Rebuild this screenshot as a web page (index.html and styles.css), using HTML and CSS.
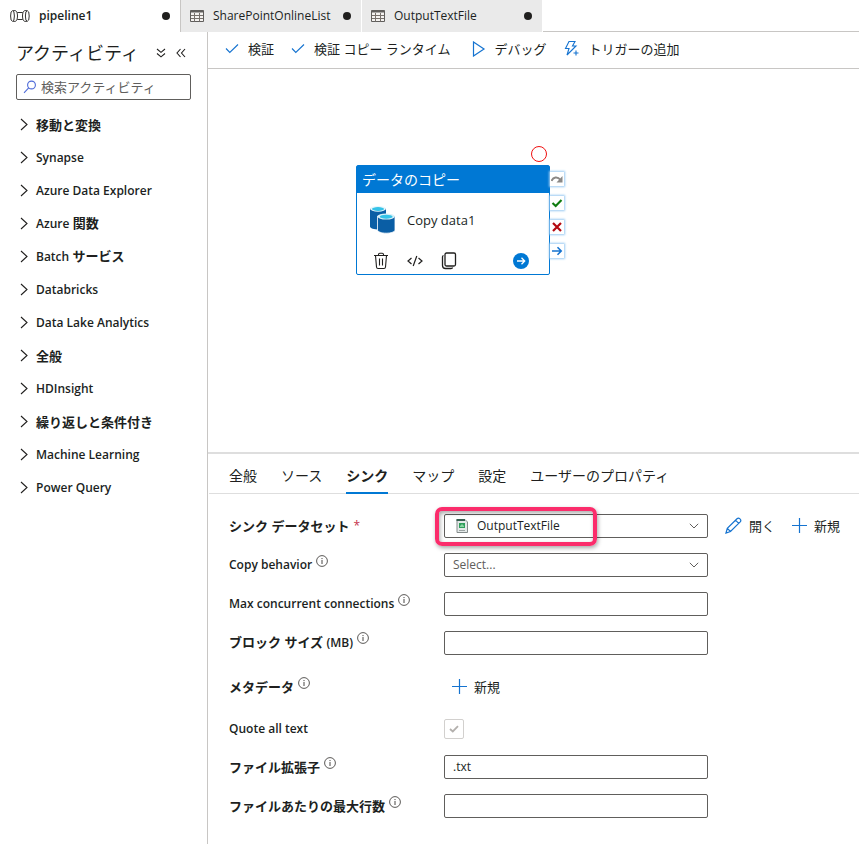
FILE: index.html
```html
<!DOCTYPE html>
<html lang="ja">
<head>
<meta charset="utf-8">
<title>pipeline1</title>
<meta name="viewport" content="width=device-width, initial-scale=1">
<link rel="stylesheet" href="styles.css">
</head>
<body>
<svg class="defs" width="0" height="0" aria-hidden="true">
  <symbol id="check" viewBox="0 0 14 14"><path d="M1 6.500 4.800 10.500 13 2.500" fill="none" stroke="currentColor" stroke-width="1.100"/></symbol>
  <symbol id="chevron" viewBox="0 0 8 14"><path d="M1 1 7 6.500 1 12" fill="none" stroke="currentColor" stroke-width="1.100"/></symbol>
  <symbol id="down" viewBox="0 0 10 6"><path d="M.8.8 5 5 9.2.8" fill="none" stroke="currentColor"/></symbol>
  <symbol id="plus" viewBox="0 0 15 15"><path d="M7.5 0v15M0 7.5h15" fill="none" stroke="currentColor" stroke-width="1.2"/></symbol>
  <symbol id="info" viewBox="0 0 12 12"><circle cx="6" cy="6" r="5.4" fill="none" stroke="currentColor" stroke-width=".9"/><path d="M6 5v4M6 3v1.1" fill="none" stroke="currentColor"/></symbol>
  <symbol id="table" viewBox="0 0 14 12"><path d="M.5.5h13v11H.5z" fill="#f4f2f0" stroke="#605e5c"/><path d="M.5 1.500h13" stroke="#605e5c" stroke-width="2"/><path d="M1 5.500h12M1 8.500h12M4.500 3v8.500M9.500 3v8.500" fill="none" stroke="#77716c"/></symbol>
</svg>
<nav class="tabs" aria-label="開いているリソース">
  <a class="tab active" href="#pipeline1">
    <svg width="20" height="12" viewBox="0 0 20 12" fill="none" stroke="#323130" stroke-width="1"><ellipse cx="2.500" cy="6" rx="1.900" ry="5.300"/><path d="M3 .7h2.500c1.200.4 2 2.500 2 5.300s-.8 4.900-2 5.300H3M17 .7h-2.500c-1.200.4-2 2.500-2 5.300s.8 4.900 2 5.300H17M7.300 2.500h5.400M7.300 9.500h5.400"/><ellipse cx="17.300" cy="6" rx="1.900" ry="5.300"/></svg>
    <span>pipeline1</span><i class="dot"></i>
  </a>
  <a class="tab" href="#sharepoint"><svg width="14" height="12"><use href="#table"/></svg><span>SharePointOnlineList</span><i class="dot"></i></a>
  <a class="tab" href="#output"><svg width="14" height="12"><use href="#table"/></svg><span>OutputTextFile</span><i class="dot"></i></a>
</nav>
<div class="workspace">
  <aside class="sidebar">
    <header class="side-head">
      <h1>アクティビティ</h1>
      <button type="button" aria-label="すべて展開"><svg width="10" height="10" viewBox="0 0 10 10" fill="none" stroke="currentColor" stroke-width="1.1"><path d="M1 1 5 4.300 9 1M1 5.500 5 8.800 9 5.500"/></svg></button>
      <button type="button" aria-label="折りたたむ"><svg width="10" height="10" viewBox="0 0 10 10" fill="none" stroke="currentColor" stroke-width="1.1"><path d="M4.500 1 1 5l3.500 4M9 1 5.500 5 9 9"/></svg></button>
    </header>
    <label class="search">
      <svg width="14" height="14" viewBox="0 0 14 14" fill="none" stroke="#4f6bd8" stroke-width="1.1"><circle cx="8.500" cy="5" r="3.900"/><path d="M5.700 7.800 1 12.800"/></svg>
      <input type="search" placeholder="検索アクティビティ" aria-label="検索アクティビティ">
    </label>
    <ul class="groups">
      <li><button type="button"><svg width="8" height="14"><use href="#chevron"/></svg>移動と変換</button></li>
      <li><button type="button"><svg width="8" height="14"><use href="#chevron"/></svg><span class="latin">Synapse</span></button></li>
      <li><button type="button"><svg width="8" height="14"><use href="#chevron"/></svg><span class="latin">Azure Data Explorer</span></button></li>
      <li><button type="button"><svg width="8" height="14"><use href="#chevron"/></svg><span><span class="latin">Azure</span> 関数</span></button></li>
      <li><button type="button"><svg width="8" height="14"><use href="#chevron"/></svg><span><span class="latin">Batch</span> サービス</span></button></li>
      <li><button type="button"><svg width="8" height="14"><use href="#chevron"/></svg><span class="latin">Databricks</span></button></li>
      <li><button type="button"><svg width="8" height="14"><use href="#chevron"/></svg><span class="latin">Data Lake Analytics</span></button></li>
      <li><button type="button"><svg width="8" height="14"><use href="#chevron"/></svg>全般</button></li>
      <li><button type="button"><svg width="8" height="14"><use href="#chevron"/></svg><span class="latin">HDInsight</span></button></li>
      <li><button type="button"><svg width="8" height="14"><use href="#chevron"/></svg>繰り返しと条件付き</button></li>
      <li><button type="button"><svg width="8" height="14"><use href="#chevron"/></svg><span class="latin">Machine Learning</span></button></li>
      <li><button type="button"><svg width="8" height="14"><use href="#chevron"/></svg><span class="latin">Power Query</span></button></li>
    </ul>
  </aside>
  <main class="main">
    <div class="toolbar">
      <button type="button"><svg width="14" height="14"><use href="#check"/></svg>検証</button>
      <button type="button"><svg width="14" height="14"><use href="#check"/></svg>検証 コピー ランタイム</button>
      <button type="button"><svg width="18" height="16" viewBox="-4 0 18 16" fill="none" stroke="currentColor" stroke-width="1.200"><path d="M1.500 1v14L12 8z"/></svg>デバッグ</button>
      <button type="button"><svg width="16" height="18" viewBox="0 0 16 18" fill="none" stroke="currentColor" stroke-width="1.100"><path d="M5 1.500h6L8.500 6H12L3 15l2-6.500H1.500z"/><path d="M12 10.500v5M9.500 13h5"/></svg>トリガーの追加</button>
    </div>
    <section class="canvas">
      <span class="breakpoint"></span>
      <article class="node">
        <h2>データのコピー</h2>
        <div class="node-body">
          <svg width="27" height="30" viewBox="0 0 27 30"><path d="M1 3.500v18c0 1.700 4 3 9 3V3.500z" fill="#0a5ea5"/><path d="M8 3.500h9v9H8z" fill="#0a5ea5"/><ellipse cx="9" cy="3.800" rx="8" ry="2.900" fill="#e6f6fb"/><ellipse cx="9" cy="4" rx="6" ry="1.900" fill="#35c3e8"/><path d="M8.500 11v14c0 1.700 3.800 3.200 8.700 3.200s8.800-1.500 8.800-3.200V11z" fill="#0a5ea5" stroke="#fff" stroke-width=".8"/><ellipse cx="17.200" cy="11.500" rx="8.600" ry="3.100" fill="#d8f0f8"/><ellipse cx="17.200" cy="11.700" rx="6.400" ry="2" fill="#35c3e8"/></svg>
          <span>Copy data1</span>
        </div>
        <div class="node-actions">
          <button type="button" aria-label="削除"><svg width="16" height="18" viewBox="0 0 16 18" fill="none" stroke="currentColor" stroke-width="1.100"><path d="M1 3.500h14M5.500 3.500V2.500c0-.8.500-1.300 1.300-1.300h2.400c.8 0 1.300.5 1.300 1.300v1M2.500 3.500l1 11.500c.1 1 .6 1.500 1.500 1.500h6c.9 0 1.400-.5 1.500-1.500l1-11.500M6.500 6.500v7M9.500 6.500v7"/></svg></button>
          <button type="button" aria-label="コード"><svg width="16" height="12" viewBox="0 0 16 12" fill="none" stroke="currentColor" stroke-width="1.200"><path d="M4.500 3 1 6l3.500 3M11.500 3 15 6l-3.500 3M9.800 1 6.200 11"/></svg></button>
          <button type="button" aria-label="複製"><svg width="16" height="18" viewBox="0 0 16 18" fill="none" stroke="currentColor" stroke-width="1.300"><rect x="4" y="1" width="10.500" height="13" rx="1.500"/><path d="M2.500 3.500c-.8.300-1 .8-1 1.500v8.500c0 2 1 3 3 3H10c.8 0 1.400-.3 1.600-1"/></svg></button>
          <button type="button" class="go" aria-label="次へ"><svg width="16" height="16" viewBox="0 0 16 16"><circle cx="8" cy="8" r="8" fill="#0078d4"/><path d="M4 8h7.500M8.500 4.800 11.700 8l-3.200 3.200" fill="none" stroke="#fff" stroke-width="1.300"/></svg></button>
        </div>
      </article>
      <div class="ports">
        <button type="button" aria-label="スキップ時"><svg width="12" height="12" viewBox="0 0 12 12" fill="none" stroke="#8a8886" stroke-width="1.900"><path d="M.5 8C2 4 6.500 3 9.500 7"/><path d="M11.500 3v6.500H5.500z" fill="#8a8886" stroke="none"/></svg></button>
        <button type="button" aria-label="成功時"><svg width="12" height="12" viewBox="0 0 12 12" fill="none" stroke="#107c10" stroke-width="2.100"><path d="M1.500 6 4.700 9 10.500 3"/></svg></button>
        <button type="button" aria-label="失敗時"><svg width="12" height="12" viewBox="0 0 12 12" fill="none" stroke="#b4080f" stroke-width="2.200"><path d="m2 2 8 8M10 2l-8 8"/></svg></button>
        <button type="button" aria-label="完了時"><svg width="12" height="12" viewBox="0 0 12 12" fill="none" stroke="#1573d0" stroke-width="1.600"><path d="M1 6h9M6.500 2.300 10.200 6 6.500 9.700"/></svg></button>
      </div>
    </section>
    <section class="panel">
      <nav class="panel-tabs" aria-label="プロパティ">
        <a href="#general">全般</a><a href="#source">ソース</a><a class="current" href="#sink">シンク</a><a href="#mapping">マップ</a><a href="#settings">設定</a><a href="#user">ユーザーのプロパティ</a>
      </nav>
      <form class="form">
        <div class="row">
          <label for="dataset">シンク データセット <b class="req">*</b></label>
          <div class="field">
            <div class="control">
              <select id="dataset" class="with-icon"><option>OutputTextFile</option></select>
              <svg class="file" width="12" height="14" viewBox="0 0 12 14"><path d="M1 .5h8L11.500 3v10.500H1z" fill="#e4e9e8" stroke="#848b8b"/><path d="M.5 0h8.500v2H.5z" fill="#365f50"/><path d="M3 4h6v5H3z" fill="#2f9e5b"/><path d="M4 7 6 5l2 2v1H4z" fill="#8bd5a4"/><path d="M3 11.500h6" stroke="#9ba3a3"/></svg>
              <svg class="caret" width="10" height="6"><use href="#down"/></svg>
              <span class="highlight"></span>
            </div>
            <button type="button" class="link"><svg width="17" height="17" viewBox="0 0 17 17" fill="none" stroke="currentColor" stroke-width="1.200"><path d="M1 16 2.300 11.300 12 1.800c1.800-1.800 5 1 3.200 3L5.500 14.500zM10.500 3.200l3.200 3.200M2.300 11.300l3.200 3.200"/></svg>開く</button>
            <button type="button" class="link"><svg width="15" height="15"><use href="#plus"/></svg>新規</button>
          </div>
        </div>
        <div class="row">
          <label for="behavior"><span class="latin">Copy behavior</span><svg class="info" width="12" height="12"><use href="#info"/></svg></label>
          <div class="field"><div class="control">
            <select id="behavior" class="empty"><option>Select...</option></select>
            <svg class="caret" width="10" height="6"><use href="#down"/></svg>
          </div></div>
        </div>
        <div class="row">
          <label for="conn"><span class="latin">Max concurrent connections</span><svg class="info" width="12" height="12"><use href="#info"/></svg></label>
          <div class="field"><div class="control"><input id="conn" type="text"></div></div>
        </div>
        <div class="row">
          <label for="block"><span>ブロック サイズ <span class="latin">(MB)</span></span><svg class="info" width="12" height="12"><use href="#info"/></svg></label>
          <div class="field"><div class="control"><input id="block" type="text"></div></div>
        </div>
        <div class="row tall">
          <label for="meta">メタデータ<svg class="info" width="12" height="12"><use href="#info"/></svg></label>
          <div class="field"><button id="meta" type="button" class="link inset"><svg width="15" height="15"><use href="#plus"/></svg>新規</button></div>
        </div>
        <div class="row short">
          <label for="quote"><span class="latin">Quote all text</span></label>
          <div class="field"><span class="tick"><input id="quote" type="checkbox" checked disabled><svg width="10" height="8" viewBox="0 0 10 8"><path d="M1 4 3.800 6.500 9 1.200" fill="none" stroke="#b3b0ad" stroke-width="1.800"/></svg></span></div>
        </div>
        <div class="row">
          <label for="ext">ファイル拡張子<svg class="info" width="12" height="12"><use href="#info"/></svg></label>
          <div class="field"><div class="control"><input id="ext" type="text" value=".txt"></div></div>
        </div>
        <div class="row">
          <label for="rows">ファイルあたりの最大行数<svg class="info" width="12" height="12"><use href="#info"/></svg></label>
          <div class="field"><div class="control"><input id="rows" type="text"></div></div>
        </div>
      </form>
    </section>
  </main>
</div>
</body>
</html>
```

FILE: styles.css
```css
* { box-sizing: border-box; }
body {
  margin: 0;
  min-height: 100vh;
  display: flex;
  flex-direction: column;
  background: #fff;
  color: #201f1e;
  font: 13px/20px "Open Sans", "Noto Sans CJK JP", sans-serif;
}
button, input, select { font: inherit; color: inherit; }
button { border: 0; padding: 0; background: none; cursor: pointer; }
a { color: inherit; text-decoration: none; }
svg { flex: none; display: block; }
.defs { position: absolute; }
.latin { font-size: 12px; }

.tabs { display: flex; height: 32px; box-shadow: inset 0 -1px #c8c6c4; }
.tab {
  flex: 0 1 181px;
  min-width: 0;
  display: flex;
  align-items: center;
  gap: 9px;
  padding: 0 10px 0 9px;
  border-right: 1px solid #fff;
  background: #eaeaea;
  font-size: 12px;
}
.tab.active {
  padding-left: 10px;
  background: #fff;
  font-weight: 600;
  border-color: #c8c6c4;
}
.dot { width: 8px; height: 8px; margin-left: auto; border-radius: 50%; background: #201f1e; }

.workspace { flex: 1; display: flex; }
.sidebar { flex: 0 0 208px; min-width: 0; padding: 0 16px; border-right: 1px solid #c8c6c4; }
.side-head { display: flex; align-items: center; gap: 10px; height: 42px; }
.side-head h1 { flex: 1; min-width: 0; margin: 0; font-size: 18px; line-height: 24px; font-weight: 400; white-space: nowrap; }
.side-head button:last-child { margin-right: 5px; }
.search {
  display: flex;
  align-items: center;
  gap: 4px;
  height: 26px;
  padding: 0 6px;
  border: 1px solid #605e5c;
  border-radius: 2px;
}
.search input { flex: 1; width: 100%; min-width: 0; padding: 0; border: 0; outline: 0; background: none; }
.search input::placeholder { color: #605e5c; opacity: 1; }
.groups { margin: 8px 0 0; padding: 0; list-style: none; }
.groups button {
  display: flex;
  align-items: center;
  gap: 8px;
  width: 100%;
  height: 33px;
  padding-left: 4px;
  font-weight: 600;
  text-align: left;
}

.main { flex: 1; min-width: 0; display: flex; flex-direction: column; }
.toolbar { display: flex; align-items: center; gap: 17px; height: 37px; padding: 0 17px 2px; border-bottom: 1px solid #c8c6c4; }
.toolbar button { display: flex; align-items: center; gap: 9px; white-space: nowrap; }
.toolbar svg { color: #1573d0; }

.canvas { position: relative; flex: 1; min-height: 383px; }
.breakpoint { position: absolute; left: 323px; top: 77px; width: 16px; height: 16px; border: 1px solid #f01010; border-radius: 50%; }
.node {
  position: absolute;
  left: 148px;
  top: 96px;
  width: 194px;
  border: 1px solid #0078d4;
  border-radius: 2px;
  background: #fff;
}
.node h2 { margin: 0; padding: 0 5px; background: #0078d4; color: #fff; font-size: 14px; line-height: 27px; font-weight: 400; }
.node-body { display: flex; align-items: center; gap: 11px; height: 54px; padding: 0 12px; }
.node-actions { display: flex; align-items: center; gap: 18px; height: 27px; padding: 0 20px 0 16px; }
.node-actions .go { margin-left: auto; }
.ports { position: absolute; left: 342px; top: 103px; display: grid; gap: 10px; }
.ports button { width: 14px; height: 14px; padding: 1px; background: #fff; box-shadow: 0 0 2px 1px #9ccbf2; }

.panel { border-top: 2px solid #dedede; padding-bottom: 19px; }
.panel-tabs { display: flex; gap: 24px; height: 40px; margin-left: 1px; padding-left: 20px; border-bottom: 1px solid #dedede; font-size: 14px; line-height: 44px; white-space: nowrap; }
.panel-tabs .current { height: 40px; font-weight: 600; box-shadow: inset 0 -2px #0078d4; }
.form { padding: 12px 12px 0 21px; }
.row { display: grid; grid-template-columns: 215px minmax(0, 1fr); align-items: center; height: 39px; }
.row.tall { height: 49px; }
.row.short { height: 36px; }
.row label { display: flex; align-items: center; gap: 4px; font-weight: 600; white-space: nowrap; }
.req { color: #c4314b; font-size: 12px; font-weight: 400; }
.info { align-self: flex-start; color: #484644; }
.field { display: flex; align-items: center; gap: 17px; }
.control { position: relative; flex: 0 1 264px; min-width: 0; }
.control input, .control select {
  display: block;
  width: 100%;
  height: 24px;
  margin: 0;
  padding: 0 8px;
  border: 1px solid #605e5c;
  border-radius: 2px;
  background: #fff;
  font-size: 12px;
  appearance: none;
}
.control .with-icon { padding-left: 32px; }
.control .empty { color: #605e5c; }
.file { position: absolute; left: 12px; top: 5px; pointer-events: none; }
.caret { position: absolute; right: 9px; top: 9px; color: #605e5c; pointer-events: none; }
.highlight {
  position: absolute;
  left: -9px;
  top: -7px;
  width: 162px;
  height: 39px;
  border: 4px solid #fb2c6b;
  border-radius: 7px;
  box-shadow: 1px 2px 4px rgba(0, 0, 0, .35), inset 1px 2px 4px rgba(0, 0, 0, .35);
  pointer-events: none;
}
.link { display: flex; align-items: center; gap: 7px; white-space: nowrap; }
.link svg { color: #1573d0; }
.inset { margin-left: 8px; }
.tick { position: relative; display: grid; place-items: center; width: 20px; height: 20px; }
.tick input { width: 20px; height: 20px; margin: 0; border: 1px solid #d2d0ce; border-radius: 2px; appearance: none; grid-area: 1 / 1; }
.tick svg { grid-area: 1 / 1; z-index: 1; pointer-events: none; }
```
